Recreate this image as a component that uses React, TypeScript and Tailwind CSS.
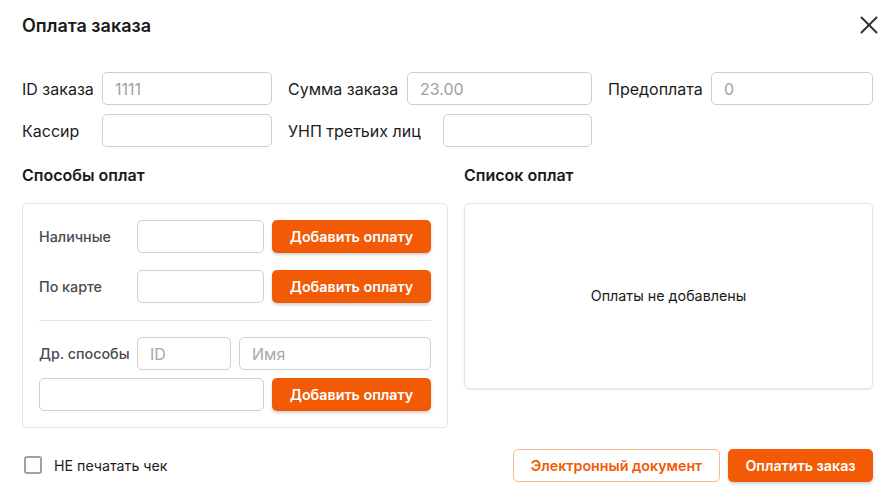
import { X } from "lucide-react";

const inputBase =
  "h-8 rounded-[5px] border border-[#cfcfcf] bg-white px-3 text-[16px] text-[#1a1a1a] placeholder:text-[#a8a8a8] outline-none";

function Field({
  label,
  labelW,
  value,
  disabled,
  className,
}: {
  label: string;
  labelW: string;
  value?: string;
  disabled?: boolean;
  className: string;
}) {
  return (
    <div className={`flex items-center ${className}`}>
      <span className={`${labelW} shrink-0 text-[16px] text-[#1c1c1c]`}>{label}</span>
      <input
        className={`${inputBase} h-[33px] min-w-0 flex-1 text-[16.5px] ${disabled ? "bg-[#f5f5f5] text-[#a0a0a0]" : ""}`}
        defaultValue={value}
        disabled={disabled}
      />
    </div>
  );
}

function AddButton() {
  return (
    <button className="h-[33px] rounded-[5px] bg-[#f25a05] text-[14.3px] font-semibold text-white shadow-[0_2px_3px_rgba(0,0,0,0.18)]">
      Добавить оплату
    </button>
  );
}

export default function App() {
  return (
    <div
      className="h-[503px] w-[895px] bg-white px-[22px] pt-[11px]"
      style={{ fontFamily: "Inter, 'Noto Sans', sans-serif" }}
    >
      {/* Header */}
      <div className="flex h-7 items-center justify-between">
        <h1 className="text-[18px] font-semibold text-[#1a1a1a]">Оплата заказа</h1>
        <X className="mr-[-11px] h-[30px] w-[30px] text-[#333]" strokeWidth={1.6} />
      </div>

      {/* Order fields */}
      <div className="mt-[33px] flex flex-col gap-[9px]">
        <div className="flex gap-4">
          <Field className="w-[250px]" labelW="w-[80px]" label="ID заказа" value="1111" disabled />
          <Field className="w-[304px]" labelW="w-[119px]" label="Сумма заказа" value="23.00" disabled />
          <Field className="w-[265px]" labelW="w-[103px]" label="Предоплата" value="0" disabled />
        </div>
        <div className="flex gap-4">
          <Field className="w-[250px]" labelW="w-[80px]" label="Кассир" />
          <Field className="w-[304px]" labelW="w-[155px]" label="УНП третьих лиц" />
        </div>
      </div>

      {/* Sections */}
      <div className="mt-4 grid grid-cols-[426px_1fr] gap-x-[16px]">
        <div>
          <h2 className="h-6 text-[16px] leading-6 font-semibold text-[#1a1a1a]">Способы оплат</h2>
          <div className="mt-4 rounded-[5px] border border-[#e4e4e4] p-4">
            <div className="grid grid-cols-[90px_127px_1fr] items-center gap-x-2">
              <span className="text-[14.3px] font-medium text-[#4a4a52]">Наличные</span>
              <input className={`${inputBase} h-[33px] w-full`} />
              <AddButton />
            </div>
            <div className="mt-[17px] grid grid-cols-[90px_127px_1fr] items-center gap-x-2">
              <span className="text-[14.3px] font-medium text-[#4a4a52]">По карте</span>
              <input className={`${inputBase} h-[33px] w-full`} />
              <AddButton />
            </div>
            <div className="mt-[17px] mb-4 h-px bg-[#e4e4e4]" />
            <div className="grid grid-cols-[90px_94px_1fr] items-center gap-x-2">
              <span className="text-[14.3px] font-medium whitespace-nowrap text-[#4a4a52]">Др. способы</span>
              <input className={`${inputBase} h-[33px] w-full text-[16.5px]`} placeholder="ID" />
              <input className={`${inputBase} h-[33px] w-full text-[16.5px]`} placeholder="Имя" />
            </div>
            <div className="mt-2 grid grid-cols-[225px_1fr] items-center gap-x-2">
              <input className={`${inputBase} h-[33px] w-full`} />
              <AddButton />
            </div>
          </div>
        </div>

        <div>
          <h2 className="h-6 text-[16px] leading-6 font-semibold text-[#1a1a1a]">Список оплат</h2>
          <div className="mt-4 flex h-[186px] items-center justify-center rounded-[5px] border border-[#e4e4e4] shadow-[0_1px_2px_rgba(0,0,0,0.08)]">
            <span className="text-[14.3px] text-[#1a1a1a]">Оплаты не добавлены</span>
          </div>
        </div>
      </div>

      {/* Footer */}
      <div className="mt-[21px] flex items-center justify-between">
        <label className="flex items-center gap-3 pl-[2px]">
          <span className="h-[18px] w-[18px] rounded-[3px] border-2 border-[#a0a0a0] bg-white" />
          <span className="text-[14.2px] text-[#1c1c1c]">НЕ печатать чек</span>
        </label>
        <div className="flex gap-2">
          <button className="h-[33px] w-[207px] rounded-[5px] border border-[#f8b896] bg-white text-[14.25px] font-semibold text-[#f25a05]">
            Электронный документ
          </button>
          <button className="h-[33px] w-[145px] rounded-[5px] bg-[#f25a05] text-[14.25px] font-semibold text-white shadow-[0_2px_3px_rgba(0,0,0,0.18)]">
            Оплатить заказ
          </button>
        </div>
      </div>
    </div>
  );
}
